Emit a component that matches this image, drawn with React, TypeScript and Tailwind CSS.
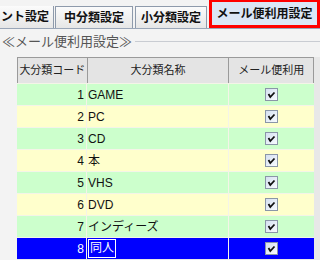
import React from "react";

const rows = [
  { code: 1, name: "GAME" },
  { code: 2, name: "PC" },
  { code: 3, name: "CD" },
  { code: 4, name: "本" },
  { code: 5, name: "VHS" },
  { code: 6, name: "DVD" },
  { code: 7, name: "インディーズ" },
  { code: 8, name: "同人" },
];

function Check() {
  return (
    <span className="inline-flex w-[13px] h-[13px] border border-[#8a96a8] bg-gradient-to-br from-[#d5e0f0] to-[#f8fbff] items-center justify-center">
      <svg width="9" height="9" viewBox="0 0 9 9">
        <path d="M1.5 4 L3.3 7 L7.5 2.5" fill="none" stroke="#111" strokeWidth="1.8" />
      </svg>
    </span>
  );
}

function Tab({ label }: { label: string }) {
  return (
    <div className="h-[22px] flex items-center justify-center border border-[#8e9aab] border-b-0 font-bold text-[12px] text-[#111] bg-gradient-to-b from-[#fbfbfb] to-[#e6e6e6]">
      {label}
    </div>
  );
}

export default function App() {
  return (
    <div
      className="w-[320px] h-[260px] overflow-hidden bg-[#f3f3f3] flex flex-col"
      style={{ fontFamily: '"Liberation Sans", "Noto Sans CJK JP", sans-serif' }}
    >
      <div className="flex items-end h-[29px] border-b border-[#9aa6b8] bg-[#f3f3f3]">
        <div className="w-[54px] overflow-hidden flex justify-end">
          <div className="w-[74px] shrink-0 h-[22px] flex items-center justify-end pr-[4px] border-r border-[#8e9aab] bg-gradient-to-b from-[#fbfbfb] to-[#e6e6e6] font-bold text-[12px] text-[#111]">
            ント設定
          </div>
        </div>
        <div className="w-[78px] ml-[1px]">
          <Tab label="中分類設定" />
        </div>
        <div className="w-[72px] ml-[2px]">
          <Tab label="小分類設定" />
        </div>
        <div className="ml-[2px] w-[111px] h-[29px] border-[3px] border-[#ff0000] bg-[#dbe6f6] flex items-center justify-center font-bold text-[12px] text-[#111]">
          メール便利用設定
        </div>
      </div>
      <div className="flex items-center mt-[2px] h-[22px]">
        <span className="ml-[2px] text-[13px] text-[#555]">≪メール便利用設定≫</span>
        <div className="flex-1 ml-[3px] h-[2px] border-t border-[#c9ccd2] border-b-white" />
      </div>
      <div className="ml-[17px] mt-[4px] w-[303px] flex-1 bg-[#e8e8e8] text-[12px] text-[#111]">
        <div className="w-[297px] flex h-[26px] bg-[#e4e4e4] border-t border-l border-[#9a9a9a] text-[#222] text-[11px]">
          <div className="w-[70px] flex items-center justify-center border-r border-[#9a9a9a]">大分類コード</div>
          <div className="w-[142px] flex items-center justify-center border-r border-[#9a9a9a]">大分類名称</div>
          <div className="w-[85px] flex items-center justify-center border-r border-[#9a9a9a]">メール便利用</div>
        </div>
        {rows.map((r, i) => {
          const sel = i === 7;
          const bg = sel ? "bg-[#0000ff] text-white" : i % 2 === 0 ? "bg-[#ccffcc]" : "bg-[#ffffcc]";
          return (
            <div key={r.code} className={"w-[297px] flex h-[22px] border-t border-[#f4f4e8] " + bg}>
              <div className="w-[70px] flex items-center justify-end pr-[2px] border-r border-[#f4f4e8]">{r.code}</div>
              <div className="w-[142px] flex items-center pl-[1px] border-r border-[#f4f4e8]">
                {sel ? <span className="border border-white px-[1px] leading-[17px]">{r.name}</span> : r.name}
              </div>
              <div className="w-[85px] flex items-center justify-center">
                <Check />
              </div>
            </div>
          );
        })}
      </div>
    </div>
  );
}
